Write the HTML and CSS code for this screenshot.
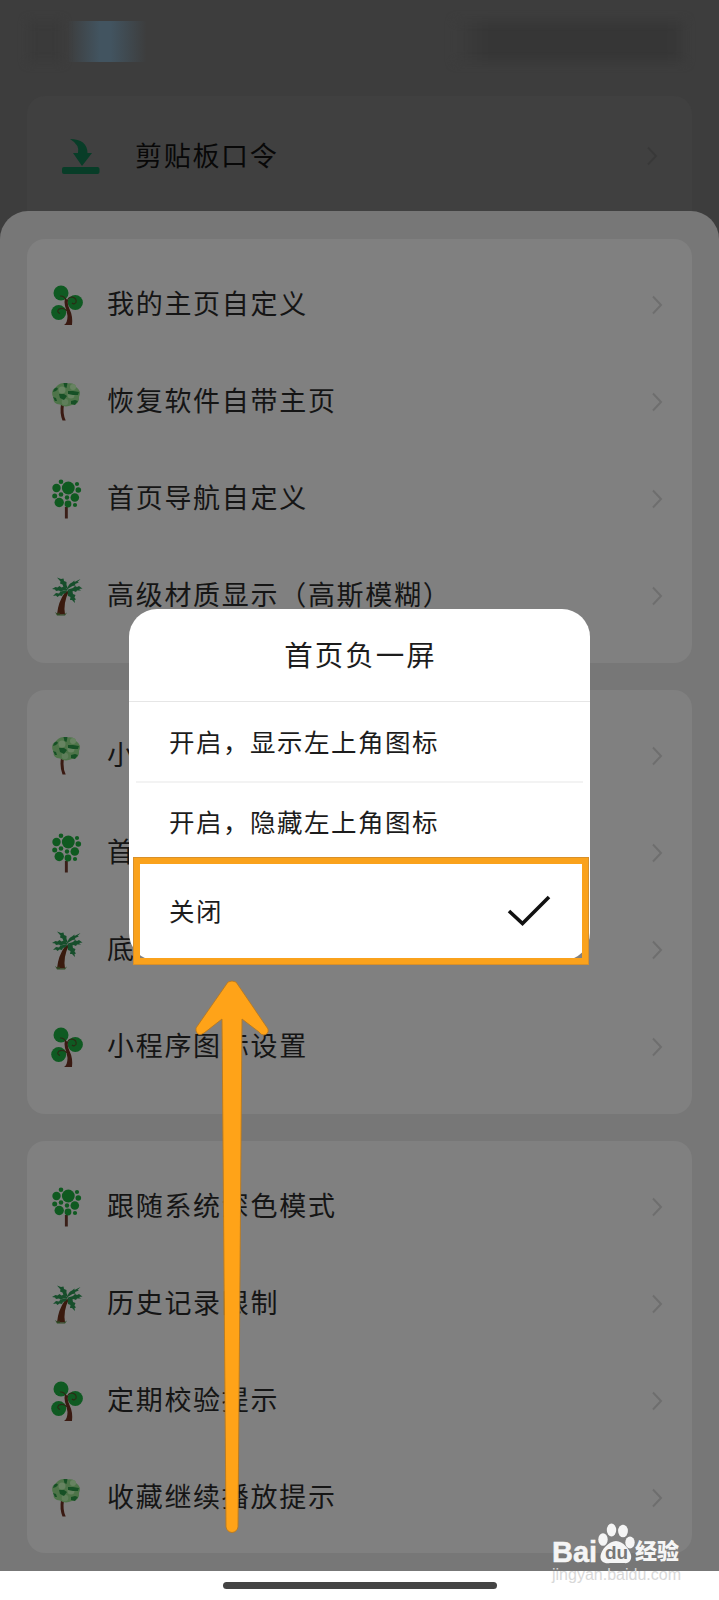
FILE: index.html
```html
<!DOCTYPE html>
<html lang="zh-CN">
<head>
<meta charset="utf-8">
<title>首页负一屏</title>
<link rel="stylesheet" href="styles.css">
</head>
<body>
<svg class="defs" width="0" height="0">
  <symbol id="chev" viewBox="0 0 12 20"><path d="M2 1.500 L10 10 L2 18.500" fill="none" stroke="#6e6e6e" stroke-width="2"/></symbol>
  <symbol id="t1" viewBox="0 0 36 40">
    <circle cx="11" cy="8" r="7.5" fill="#0f5a22"/><circle cx="25.300" cy="17.500" r="7.600" fill="#0f5a22"/><circle cx="8.700" cy="27.500" r="7.500" fill="#0f5a22"/>
    <path d="M16 15Q14 10.500 10 11M17 17Q18 12 22 12Q27 13 26 17.500Q24 20 22 18M17 26Q14 22 9 24Q6 27 10 28.500" fill="none" stroke="#2c2a15" stroke-width="1.1"/>
    <path d="M14 40Q17.500 38 17.500 31Q17 26 15 21Q14 17 15 13L17.500 15Q17.500 20 19.500 24Q23 31 22 40Z" fill="#3a1a12"/>
  </symbol>
  <symbol id="t2" viewBox="0 0 36 40">
    <path d="M11 22H14Q12.500 32 15.700 38.500H12.500Q9.500 31 11 22Z" fill="#3a1a12"/>
    <path d="M8 3Q12 0 16 1.500Q25 0 26 5Q32 9 29 15Q30 22 22 23Q15 26 10 22.500Q3 22 3.500 16Q0 9 5 6Z" fill="#4e7449"/>
    <circle cx="12" cy="8" r="3.500" fill="#678361"/><circle cx="21" cy="13" r="3.500" fill="#678361"/><circle cx="15" cy="20" r="3.300" fill="#5f7e5a"/><circle cx="23" cy="5" r="3" fill="#678361"/>
    <path d="M13.500 1h4l-1 5-2-1zM4 7q3-3 4 0l-2 2-3 1zM18 9h5l6 1-1 3-5 0-5-1zM9 12l5 0 3 2-3 4-4-2zM21 19l4-1 3 1-3 4-4-1zM3 15l3 1 1 3-2 0z" fill="#165025"/>
  </symbol>
  <symbol id="t3" viewBox="0 0 36 40">
    <path d="M14.900 28h2.900v11.500h-2.900z" fill="#3a1f18"/>
    <g fill="#0f5a20"><circle cx="18.300" cy="9" r="6.400"/><circle cx="11" cy="2.800" r="2.300"/><circle cx="6.500" cy="9" r="4.200"/><circle cx="27" cy="5" r="2.100"/><circle cx="28.300" cy="11" r="2.800"/><circle cx="4.700" cy="17" r="2.500"/><circle cx="11" cy="15.500" r="2.300"/><circle cx="24.800" cy="18.500" r="4.300"/><circle cx="17" cy="18.500" r="2.200"/><circle cx="9.200" cy="23.500" r="4.700"/><circle cx="18" cy="25" r="3.400"/><circle cx="25" cy="26" r="2.100"/></g>
  </symbol>
  <symbol id="t4" viewBox="0 0 36 40">
    <path d="M15.500 15.500l3.500-.5Q13 27 15 38.500H7Q8 26 15.500 15.500Z" fill="#3a1a0e"/>
    <g fill="#164e2b">
      <path d="M18.500 13.500L13.500 11 12.500 8.500 10 7.500 10.500 5.500 7 1.500 11 3 13.500 2.500 14 5 16.500 6 16.500 9Z"/>
      <path d="M17.500 13Q18 8 22 6.500l2.500-2 0 1.500 6-3-3 3 1.500.5-4 1.500.5 1.500-3 .5Z"/>
      <path d="M18 13.500l5-1.500 2-2 2 1 2-1 2 1.500 1.500 1-3.500.5 2 1.500-4 0-1 1.500-2.500-1-2 1Z"/>
      <path d="M17.500 13.500l5 2 .5 2.500 2.500 1-1 2.500 1.500 2-1.500.5 .500 3-3-3-2 0 .5-3-2.500-1Z"/>
      <path d="M18 14l-4-3.500-2.500 1-2-1.500-2 1.500-2-.5-3.500 2 3 .5 1 1.500 3-.5 1.500 1 3-1Z"/>
      <path d="M17 14l-4 1-2.500 .5-1.500 2-3-.5-3 3 3-.5 1.500 1.500 2-1.500 2.500 .5 1-2 3-1Z"/>
    </g>
    <path d="M5 36l3 2 1-2 1 2.500 4 0 3-2-2 3-8 0z" fill="#2e4a24"/>
  </symbol>
</svg>
<div class="screen">
  <header class="status"><i class="smudge left"></i><i class="blue"></i><i class="smudge right"></i></header>
  <section class="back-card">
    <svg class="down" viewBox="0 0 38 36"><path d="M8 0Q25 0 25.500 14H30L20 27 11 14H16Q18 6 8 0Z" fill="#083d28"/><rect x="0" y="28" width="37.500" height="7" rx="2" fill="#083d28"/></svg>
    <span class="label">剪贴板口令</span>
    <svg class="chev"><use href="#chev"/></svg>
  </section>
  <main class="sheet">
    <section class="card">
      <div class="row"><svg class="tree"><use href="#t1"/></svg><span class="label">我的主页自定义</span><svg class="chev"><use href="#chev"/></svg></div>
      <div class="row"><svg class="tree"><use href="#t2"/></svg><span class="label">恢复软件自带主页</span><svg class="chev"><use href="#chev"/></svg></div>
      <div class="row"><svg class="tree"><use href="#t3"/></svg><span class="label">首页导航自定义</span><svg class="chev"><use href="#chev"/></svg></div>
      <div class="row"><svg class="tree"><use href="#t4"/></svg><span class="label">高级材质显示（高斯模糊）</span><svg class="chev"><use href="#chev"/></svg></div>
    </section>
    <section class="card">
      <div class="row"><svg class="tree"><use href="#t2"/></svg><span class="label">小</span><svg class="chev"><use href="#chev"/></svg></div>
      <div class="row"><svg class="tree"><use href="#t3"/></svg><span class="label">首</span><svg class="chev"><use href="#chev"/></svg></div>
      <div class="row"><svg class="tree"><use href="#t4"/></svg><span class="label">底</span><svg class="chev"><use href="#chev"/></svg></div>
      <div class="row"><svg class="tree"><use href="#t1"/></svg><span class="label">小程序图标设置</span><svg class="chev"><use href="#chev"/></svg></div>
    </section>
    <section class="card last">
      <div class="row"><svg class="tree"><use href="#t3"/></svg><span class="label">跟随系统深色模式</span><svg class="chev"><use href="#chev"/></svg></div>
      <div class="row"><svg class="tree"><use href="#t4"/></svg><span class="label">历史记录限制</span><svg class="chev"><use href="#chev"/></svg></div>
      <div class="row"><svg class="tree"><use href="#t1"/></svg><span class="label">定期校验提示</span><svg class="chev"><use href="#chev"/></svg></div>
      <div class="row"><svg class="tree"><use href="#t2"/></svg><span class="label">收藏继续播放提示</span><svg class="chev"><use href="#chev"/></svg></div>
    </section>
  </main>
  <footer class="nav"><i class="home"></i></footer>

  <div class="dialog">
    <h1 class="title">首页负一屏</h1>
    <div class="option first">开启，显示左上角图标</div>
    <div class="option second">开启，隐藏左上角图标</div>
    <div class="option third">关闭<svg class="check" viewBox="0 0 44 32"><path d="M2 16L15.500 28.500 42 2" fill="none" stroke="#111" stroke-width="3.600"/></svg></div>
  </div>
  <div class="highlight"></div>
  <svg class="arrow" viewBox="0 0 74 554"><path d="M33 2Q37 0 41 2L73 49Q74 54 69 55Q66 55 64 52L47 39 43 547Q42 552 37 552.500Q32 552 31 547L27 39 9 53Q3 57 1 51L1 48Z" fill="#ffa318" stroke="#b87920" stroke-width=".9"/></svg>
  <div class="mark">
    <div class="brand"><span class="bai">Bai</span><span class="paw"><svg viewBox="0 0 38 42"><g fill="#f5f5f5"><ellipse cx="6" cy="16.500" rx="4.700" ry="6.300"/><ellipse cx="14.500" cy="7" rx="4.700" ry="6.500"/><ellipse cx="26" cy="8" rx="4.900" ry="6.300"/><ellipse cx="33" cy="19.500" rx="4.700" ry="6"/><path d="M19 18C12 18 4 27 3.500 33C3 39 8 41 13 40H27C32 41 35 37 34 32C33 27 26 18 19 18Z"/></g></svg><b>du</b></span><span class="jy">经验</span></div>
    <div class="url">jingyan.baidu.com</div>
  </div>
</div>
</body>
</html>
```

FILE: styles.css
```css
* { box-sizing: border-box; }
body { margin: 0; font-family: "Noto Sans CJK SC", sans-serif; color: #151515; }
.defs { position: absolute; }
.screen { position: relative; width: 719px; height: 1600px; overflow: hidden; background: #3d3d3d; display: flex; flex-direction: column; }

.status { height: 96px; flex: none; display: flex; padding: 21px 34px 0 28px; }
.smudge { height: 41px; background: #3a3a3a; filter: blur(5px); }
.smudge.left { width: 34px; }
.blue { width: 90px; height: 41px; background: linear-gradient(90deg, #42546000 6%, #425460 42%, #425460 54%, #42546000 94%); }
.smudge.right { width: 230px; margin-left: auto; background: linear-gradient(90deg, #3d3d3d, #363636 15%, #363636 92%, #3a3a3a); }

.back-card { height: 115px; flex: none; margin: 0 27px; padding: 5px 34px 0 35px; background: #404040; border-radius: 18px 18px 0 0; display: flex; align-items: center; }
.down { width: 38px; height: 36px; margin: 2px 35px 0 0; }
.back-card .label { color: #080808; margin-top: -2px; }
.back-card .chev { opacity: .35; filter: brightness(.4); margin-top: -1px; }

.sheet { flex: none; height: 1360px; padding: 28px 27px 0; background: #777; border-radius: 28px 28px 0 0; }
.card { height: 424px; margin-bottom: 27px; padding: 16px 29px 0 23px; background: #808080; border-radius: 18px; }
.card.last { height: 412px; margin-bottom: 0; }
.row { height: 97px; display: flex; align-items: center; }
.tree { width: 36px; height: 40px; flex: none; margin: 3px 21px 0 0; }
.label { font-size: 27px; line-height: 40px; letter-spacing: 1.7px; white-space: nowrap; margin-top: -1px; }
.chev { width: 12px; height: 20px; flex: none; margin: 2px 0 0 auto; }

.nav { flex: 1; background: #fff; display: flex; justify-content: center; padding-top: 11px; }
.home { width: 274px; height: 7px; border-radius: 4px; background: #444; }

.dialog { position: absolute; left: 129px; top: 609px; width: 461px; height: 352px; background: #fff; border-radius: 28px; }
.title { margin: 0; height: 93px; border-bottom: 1px solid #e6e6e6; font-size: 28.500px; font-weight: 400; letter-spacing: 2px; text-align: center; text-indent: 2px; line-height: 90px; color: #1c1c1c; }
.option { display: flex; align-items: center; margin: 0 7px; padding: 0 33px 3px; font-size: 25.500px; letter-spacing: 1.5px; color: #1c1c1c; }
.first { height: 81px; border-bottom: 2px solid #f3f3f3; }
.second { height: 77px; }
.third { height: 102px; }
.check { width: 44px; height: 32px; margin: 3px -1px 0 auto; }
.highlight { position: absolute; left: 133px; top: 857px; width: 456px; height: 108px; border: 7px solid #faa21c; outline: 1px solid #d8902a; outline-offset: -1px; }
.arrow { position: absolute; left: 195px; top: 980px; width: 74px; height: 554px; }

.mark { position: absolute; left: 552px; top: 1523px; width: 140px; color: #f5f5f5; font-family: "Liberation Sans", "Noto Sans CJK SC", sans-serif; }
.brand { display: flex; height: 42px; align-items: flex-end; font-weight: 700; line-height: 26px; }
.bai { font-size: 29px; width: 45px; -webkit-text-stroke: .5px #f5f5f5; }
.paw { position: relative; width: 38px; height: 42px; }
.paw svg { width: 38px; height: 42px; display: block; }
.paw b { position: absolute; left: 8px; top: 19px; font-size: 19px; line-height: 22px; color: #777; }
.jy { font-size: 22px; font-weight: 900; }
.url { font-size: 16px; line-height: 18px; margin-top: 1px; color: #d8d8d8; }
```
